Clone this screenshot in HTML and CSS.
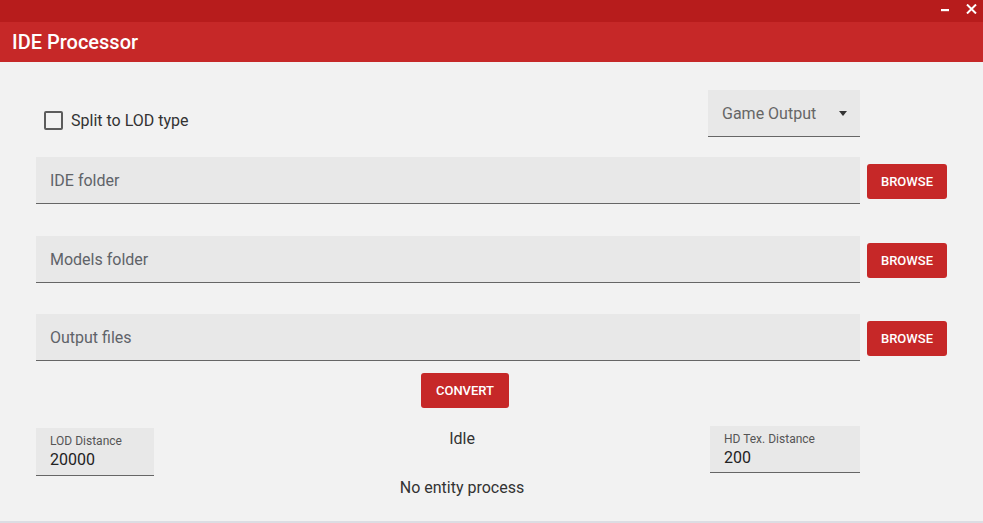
FILE: index.html
```html
<!DOCTYPE html>
<html lang="en">
<head>
    <meta charset="UTF-8">
    <meta name="viewport" content="width=device-width, initial-scale=1.0">
    <title>IDE Processor</title>
    <link rel="stylesheet" href="styles.css">
</head>
<body>
    <div class="titlebar">
        <svg class="minimize" width="8" height="3" viewBox="0 0 8 3"><rect x="0" y="0" width="8" height="2.2" fill="#fff"/></svg>
        <svg class="close" width="11" height="10" viewBox="0 0 11 10"><path d="M1 0.5 L10 9.5 M10 0.5 L1 9.5" stroke="#fff" stroke-width="2"/></svg>
    </div>
    <div class="header">
        <h1>IDE Processor</h1>
    </div>

    <div class="main">
        <div class="top-row">
            <label class="check">
                <span class="box"></span>
                Split to LOD type
            </label>
            <div class="select">
                <span>Game Output</span>
                <span class="caret"></span>
            </div>
        </div>

        <div class="path-row">
            <div class="field">IDE folder</div>
            <button class="btn">BROWSE</button>
        </div>
        <div class="path-row">
            <div class="field">Models folder</div>
            <button class="btn">BROWSE</button>
        </div>
        <div class="path-row last">
            <div class="field">Output files</div>
            <button class="btn">BROWSE</button>
        </div>

        <div class="convert-row">
            <button class="btn convert">CONVERT</button>
        </div>

        <div class="bottom-row">
            <div class="small-field lod">
                <span class="small-label">LOD Distance</span>
                <span class="small-value">20000</span>
            </div>
            <div class="status">
                <p>Idle</p>
                <p class="entity">No entity process</p>
            </div>
            <div class="small-field hd">
                <span class="small-label">HD Tex. Distance</span>
                <span class="small-value">200</span>
            </div>
        </div>
    </div>
</body>
</html>
```

FILE: styles.css
```css
body {
    margin: 0;
    height: 523px;
    overflow: hidden;
    font-family: Roboto, "Liberation Sans", sans-serif;
    background-color: #f2f2f2;
    border-bottom: 2px solid #dcdde3;
    box-sizing: border-box;
    color: #333;
}
.titlebar {
    height: 22px;
    background-color: #b71c1c;
    display: flex;
    justify-content: flex-end;
    align-items: flex-start;
    padding-right: 6px;
}
.minimize {
    margin: 9px 17px 0 0;
}
.close {
    margin-top: 4px;
}
.header {
    height: 40px;
    background-color: #c62828;
    display: flex;
    align-items: center;
    padding-left: 12px;
}
.header h1 {
    margin: 0;
    color: #fff;
    font-size: 20px;
    font-weight: 500;
}
.main {
    padding: 28px 36px 0;
}
.top-row {
    display: flex;
    justify-content: space-between;
    padding-right: 87px;
}
.check {
    display: flex;
    align-items: center;
    gap: 8px;
    font-size: 16px;
    color: #333;
    margin: 21px 0 0 8px;
    height: 19px;
}
.box {
    width: 15px;
    height: 15px;
    border: 2px solid #5c5c5c;
    border-radius: 2px;
}
.select {
    width: 152px;
    height: 46px;
    background-color: #e8e8e8;
    border-bottom: 1px solid #666;
    display: flex;
    align-items: center;
    justify-content: space-between;
    font-size: 16px;
    color: #666;
}
.select span:first-child {
    padding-left: 14px;
}
.caret {
    width: 0;
    height: 0;
    border-left: 4px solid transparent;
    border-right: 4px solid transparent;
    border-top: 5px solid #333;
    margin-right: 13px;
}
.path-row {
    display: flex;
    align-items: center;
    gap: 7px;
    margin-top: 20px;
}
.path-row + .path-row {
    margin-top: 32px;
}
.path-row.last {
    margin-top: 31px;
}
.field {
    width: 810px;
    height: 46px;
    padding-left: 14px;
    background-color: #e8e8e8;
    border-bottom: 1px solid #666;
    display: flex;
    align-items: center;
    font-size: 16px;
    color: #5f6368;
}
.btn {
    width: 80px;
    height: 35px;
    border: none;
    border-radius: 3px;
    background-color: #c62828;
    color: #fff;
    font-family: Roboto, "Liberation Sans", sans-serif;
    font-size: 13px;
    font-weight: 500;
    cursor: pointer;
    margin-top: 2px;
}
.convert-row {
    margin-top: 12px;
    padding-left: 385px;
}
.convert {
    width: 88px;
    margin-top: 0;
}
.bottom-row {
    display: flex;
    width: 824px;
    align-items: flex-start;
    margin-top: 18px;
}
.small-field {
    background-color: #e8e8e8;
    border-bottom: 1px solid #666;
    display: flex;
    flex-direction: column;
    padding-left: 14px;
}
.lod {
    width: 104px;
    height: 47px;
    margin-top: 2px;
}
.hd {
    width: 136px;
    height: 46px;
    margin-left: auto;
}
.small-label {
    font-size: 12px;
    color: #555;
    margin-top: 6px;
}
.small-value {
    font-size: 16px;
    color: #222;
    margin-top: 2px;
}
.status {
    width: 220px;
    margin-left: 198px;
    text-align: center;
    font-size: 16px;
    color: #333;
}
.status p {
    margin: 3px 0 0;
}
.status .entity {
    margin-top: 30px;
}
```
